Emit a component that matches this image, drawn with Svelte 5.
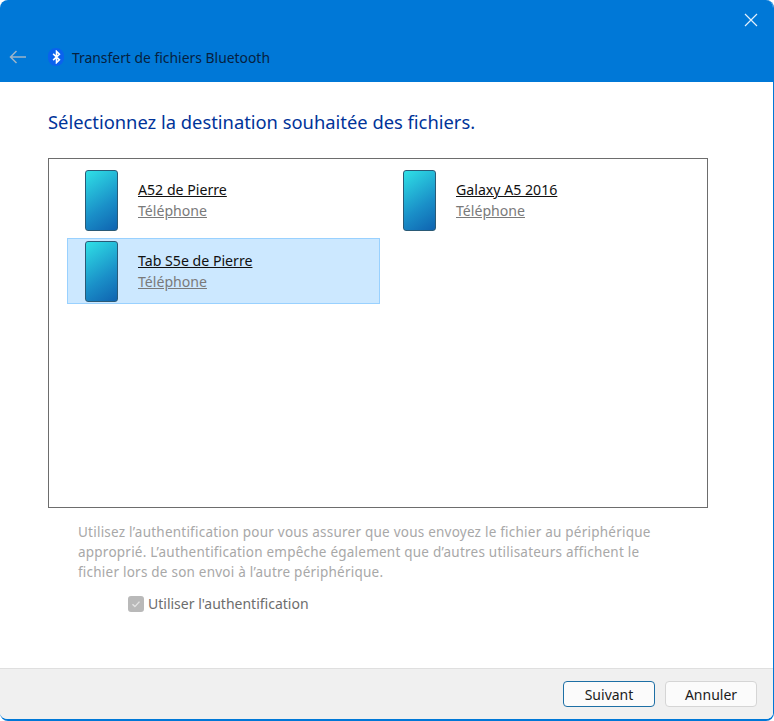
<script lang="ts">
	const devices = [
		{ name: 'A52 de Pierre', kind: 'Téléphone', selected: false },
		{ name: 'Galaxy A5 2016', kind: 'Téléphone', selected: false },
		{ name: 'Tab S5e de Pierre', kind: 'Téléphone', selected: true }
	];
</script>

<div class="window">
	<header class="titlebar">
		<button class="close" aria-label="Fermer">
			<svg width="14" height="14" viewBox="0 0 14 14"><path d="M1 1l12 12M13 1L1 13" stroke="#e3f0fb" stroke-width="1.2" fill="none" /></svg>
		</button>
		<div class="nav">
			<svg class="back" width="18" height="14" viewBox="0 0 18 14"><path d="M17 7H1.5M7.5 1L1.5 7l6 6" stroke="#9db4c8" stroke-width="1.5" fill="none" /></svg>
			<span class="bt">
				<svg width="9" height="14" viewBox="0 0 8 12"><path d="M1 3.2l5.6 5.2L4 11V1l2.6 2.6L1 8.8" stroke="#fff" stroke-width="1.4" fill="none" /></svg>
			</span>
			<span class="title">Transfert de fichiers Bluetooth</span>
		</div>
	</header>

	<main class="content">
		<h1>Sélectionnez la destination souhaitée des fichiers.</h1>

		<div class="list">
			{#each devices as d}
				<div class="tile" class:selected={d.selected}>
					<div class="phone"></div>
					<div class="labels">
						<span class="name">{d.name}</span>
						<span class="kind">{d.kind}</span>
					</div>
				</div>
			{/each}
		</div>

		<p class="note">
			Utilisez l’authentification pour vous assurer que vous envoyez le fichier au périphérique<br />
			approprié. L’authentification empêche également que d’autres utilisateurs affichent le<br />
			fichier lors de son envoi à l’autre périphérique.
		</p>

		<label class="check">
			<span class="box">
				<svg width="10" height="10" viewBox="0 0 10 10"><path d="M1.5 5.2l2.4 2.4 4.6-5" stroke="#e4e4e4" stroke-width="1.4" fill="none" /></svg>
			</span>
			Utiliser l'authentification
		</label>
	</main>

	<footer class="footer">
		<button class="btn primary">Suivant</button>
		<button class="btn">Annuler</button>
	</footer>
</div>

<style>
	:global(body) {
		background: #fff;
		font-family: 'Noto Sans', 'Open Sans', sans-serif;
	}

	.window {
		width: 774px;
		height: 721px;
		box-sizing: border-box;
		display: flex;
		flex-direction: column;
		border: 1px solid #0078d7;
		border-top: 0;
		border-left: 0;
		border-bottom-width: 2px;
		border-radius: 8px;
		overflow: hidden;
	}

	.titlebar {
		height: 82px;
		flex: none;
		background: #0078d7;
		display: flex;
		flex-direction: column;
		justify-content: flex-end;
		position: relative;
	}

	.close {
		position: absolute;
		top: 13px;
		right: 15px;
		padding: 0;
		border: 0;
		background: none;
		line-height: 0;
	}

	.nav {
		display: flex;
		align-items: center;
		height: 50px;
		padding-left: 9px;
	}

	.back {
		margin-right: 21px;
	}

	.bt {
		width: 16px;
		height: 18px;
		border-radius: 8px;
		background: #0a62ee;
		display: flex;
		align-items: center;
		justify-content: center;
		margin-right: 8px;
	}

	.title {
		font-size: 13.9px;
		color: #06213f;
	}

	.content {
		flex: 1;
		padding: 26px 0 0 48px;
	}

	h1 {
		margin: 0 0 22px;
		font-size: 18.35px;
		line-height: 28px;
		font-weight: 400;
		color: #003399;
	}

	.list {
		width: 660px;
		height: 350px;
		box-sizing: border-box;
		border: 1px solid #6d6d6d;
		padding: 8px 0 0 18px;
		display: grid;
		grid-template-columns: 318px 318px;
		grid-auto-rows: 66px;
		row-gap: 5px;
		align-content: start;
	}

	.tile {
		width: 313px;
		box-sizing: border-box;
		display: flex;
		align-items: center;
		padding-left: 17px;
		border: 1px solid transparent;
	}

	.tile.selected {
		background: #cce8ff;
		border-color: #99d1ff;
	}

	.phone {
		width: 33px;
		height: 61px;
		box-sizing: border-box;
		border: 1.5px solid #2a5a76;
		border-radius: 3px;
		background: linear-gradient(145deg, #2fe0e6, #1a8fc8 60%, #0f63b0);
		margin-right: 20px;
	}

	.labels {
		display: flex;
		flex-direction: column;
		gap: 2px;
	}

	.name {
		font-size: 14.15px;
		line-height: 19px;
		color: #111;
		text-decoration: underline;
	}

	.kind {
		font-size: 14.1px;
		line-height: 19px;
		color: #7a7a7a;
		text-decoration: underline;
	}

	.note {
		margin: 14px 0 0 30px;
		font-size: 13.5px;
		line-height: 20px;
		color: #a8a8a8;
		letter-spacing: 0.23px;
	}

	.check {
		display: flex;
		align-items: center;
		gap: 4px;
		margin: 12px 0 0 80px;
		font-size: 14px;
		line-height: 20px;
		color: #6d6d6d;
	}

	.box {
		width: 16px;
		height: 16px;
		border-radius: 3px;
		background: #b9b9b9;
		display: flex;
		align-items: center;
		justify-content: center;
	}

	.footer {
		height: 51px;
		flex: none;
		box-sizing: border-box;
		background: #f0f0f0;
		border-top: 1px solid #dfdfdf;
		display: flex;
		justify-content: flex-end;
		align-items: center;
		gap: 10px;
		padding: 0 16px 0 0;
	}

	.btn {
		width: 92px;
		height: 26px;
		box-sizing: border-box;
		border: 1px solid #d5d5d5;
		border-radius: 4px;
		background: #fbfbfb;
		font-family: inherit;
		font-size: 14px;
		color: #1b1b1b;
		padding: 0;
	}

	.btn.primary {
		border: 1.5px solid #1d6fa5;
	}
</style>
